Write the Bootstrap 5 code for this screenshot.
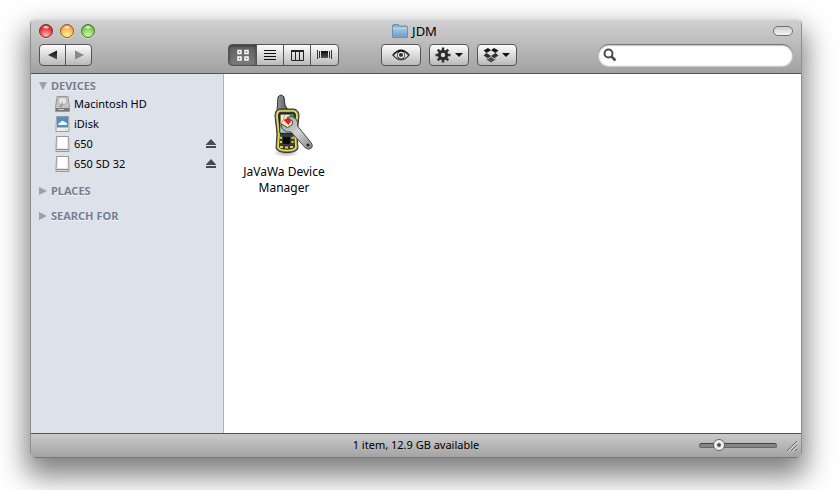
<!DOCTYPE html>
<html lang="en">
<head>
<meta charset="utf-8">
<meta name="viewport" content="width=device-width, initial-scale=1">
<title>JDM</title>
<link href="https://cdn.jsdelivr.net/npm/bootstrap@5.3.0/dist/css/bootstrap.min.css" rel="stylesheet">
<style>
body{background:#fff;font-family:"Lucida Grande","Noto Sans","Open Sans",sans-serif;font-size:12px;line-height:16px;color:#000}
svg{display:block;flex:none}
.desk{padding:19px 38px 32px 30px}
.finder{border:1px solid #8e8e8e;border-top-color:#ddd;border-bottom-color:#777;border-radius:5px;box-shadow:0 14px 28px 4px rgba(0,0,0,.5);overflow:hidden}
.chrome{background:linear-gradient(#d0d0d0,#a2a2a2);border-bottom:1px solid #515151;padding:0 8px 7px}
.title-row{height:24px;padding-bottom:2px;display:grid;grid-template-columns:1fr auto 1fr}
.title-name{padding-right:3px}
.title-row h1{font-size:13px;line-height:16px;font-weight:400}
.lights{gap:7px}
.light{width:14px;height:14px;border-radius:50%;border:1px solid #7a2a2a;box-shadow:0 1px 0 rgba(255,255,255,.4)}
.light.red{background:radial-gradient(ellipse 4px 2px at 50% 18%,#fff,transparent),radial-gradient(circle at 50% 85%,#ffb5b5,#e8333c 60%,#a51620)}
.light.amber{border-color:#9a5a25;background:radial-gradient(ellipse 4px 2px at 50% 18%,#fff,transparent),radial-gradient(circle at 50% 85%,#fff59a,#f4b44c 60%,#c8651c)}
.light.green{border-color:#477a2c;background:radial-gradient(ellipse 4px 2px at 50% 18%,#fff,transparent),radial-gradient(circle at 50% 85%,#d2f7a2,#82c95a 60%,#3f8a25)}
.pill{width:20px;height:10px;border:1px solid #707070;border-radius:5px;background:linear-gradient(#ccc,#f6f6f6)}
.tool{height:22px;padding:0;border:1px solid #545454;border-radius:4px;background:linear-gradient(#fdfdfd,#b9b9b9);color:#222;display:flex;align-items:center;justify-content:center;--bs-btn-hover-color:#222;--bs-btn-hover-border-color:#545454}
.tool.wide{width:40px}
.tool.view{width:28px}
.tool.back{width:27px}
.tool.chosen,.tool.flow{width:29px}
.tool.chosen{background:linear-gradient(#606060,#7c7c7c);color:#fff;box-shadow:inset 0 1px 3px #333}
.views{margin-left:136px}
.actions{margin-left:42px}
.search{width:195px;height:22px;border-radius:11px;background:#fff;box-shadow:inset 0 1px 2px #444,0 1px 0 #c9c9c9;padding:0 8px 0 5px}
.search input{font-size:12px;outline:0}
.sidebar{width:193px;background:#dde2ea;border-right:1px solid #b1b3b7;padding-top:4px}
.group-head{font-size:11px;font-weight:700;color:#747f92;text-shadow:0 1px 0 #f3f5f8;height:16px;padding:0 0 0 8px;gap:4px;line-height:16px}
.next-group{margin-top:9px}
.place{height:20px;font-size:11px;padding:0 6px 0 24px;gap:4px;color:#000}
.files{padding:18px 10px}
.file{width:100px;color:#000;padding:0}
.status{background:linear-gradient(#cbcbcb,#a3a3a3);border-top:1px solid #515151;height:24px;padding-bottom:1px;display:grid;grid-template-columns:1fr auto 1fr;font-size:11px}
.zoom{width:78px;height:14px;appearance:none;background:none}
.zoom::-webkit-slider-runnable-track{height:5px;border:1px solid #666;border-top-color:#444;border-radius:3px;background:#858585}
.zoom::-webkit-slider-thumb{appearance:none;width:12px;height:12px;margin-top:-5px;border:1px solid #666;border-radius:50%;background:radial-gradient(circle,#444 0 1px,#aaa 2px,#f8f8f8 3px,#ddd)}
.grip{margin-right:2px}
</style>
</head>
<body>
<svg width="0" height="0" class="position-absolute" aria-hidden="true">
<defs>
<linearGradient id="ink" x2="0" y2="1"><stop stop-color="#0b0b0b"/><stop offset="1" stop-color="#555"/></linearGradient>
<linearGradient id="fold" x2="0" y2="1"><stop stop-color="#a9cbe3"/><stop offset="1" stop-color="#6e9fc4"/></linearGradient>
<linearGradient id="steel" x2="1" y2="1"><stop stop-color="#9a9a9a"/><stop offset=".5" stop-color="#d2d2d2"/><stop offset="1" stop-color="#858585"/></linearGradient>
<linearGradient id="mast"><stop stop-color="#999"/><stop offset="1" stop-color="#555"/></linearGradient>
<radialGradient id="shade"><stop stop-color="#aaa"/><stop offset="1" stop-color="#fff"/></radialGradient>
<symbol id="card-drive" viewBox="0 0 14 16"><path d="M1 .5h12l.5 12v3H.5v-3z" fill="#d5d5d5" stroke="#999"/><path d="M2 1h10v11.500H2z" fill="#fff"/><path d="M1 13.500h12" stroke="#888"/></symbol>
<symbol id="eject" viewBox="0 0 12 10"><path d="M6 0l5.500 6H.5z" fill="#484c52"/><path d="M1 7h10v2H1z" fill="#484c52"/></symbol>
</defs>
</svg>
<main class="desk min-vh-100 d-flex">
<section class="finder flex-grow-1 d-flex flex-column">
<header class="chrome">
<div class="title-row align-items-center">
<div class="lights d-flex align-items-center">
<button class="light red p-0" aria-label="Close"></button><button class="light amber p-0" aria-label="Minimize"></button><button class="light green p-0" aria-label="Zoom"></button>
</div>
<div class="title-name d-flex align-items-center gap-1">
<svg width="16" height="14" viewBox="0 0 16 14"><path d="M.5 13.500V2Q.5.500 2 .5h4Q7 .5 7.500 2H14q1.500 0 1.500 1v10.500z" fill="#86b0cf" stroke="#6a93b0"/><path d="M1 4h14v9H1z" fill="url(#fold)"/><path d="M1 4h14" stroke="#c6deee"/></svg>
<h1 class="m-0">JDM</h1>
</div>
<button class="pill p-0 ms-auto" aria-label="Toggle toolbar"></button>
</div>
<div class="d-flex align-items-center">
<div class="btn-group" role="group" aria-label="History">
<button class="btn tool back" aria-label="Back"><svg width="10" height="10"><path d="M0 5l9-4.500v9z" fill="url(#ink)"/></svg></button>
<button class="btn tool back" aria-label="Forward"><svg width="10" height="10"><path d="M10 5L1 .5v9z" fill="#888"/></svg></button>
</div>
<div class="btn-group views" role="group" aria-label="View">
<button class="btn tool chosen" aria-label="Icons"><svg width="12" height="12" fill="none" stroke="#fff" stroke-width="1.500"><path d="M1 1.500h3v3H1zM8 1.500h3v3H8zM1 8h3v3H1zM8 8h3v3H8z"/></svg></button>
<button class="btn tool view" aria-label="List"><svg width="12" height="12" stroke="#111"><path d="M0 1.500h12M0 4.500h12M0 7.500h12M0 10.500h12"/></svg></button>
<button class="btn tool view" aria-label="Columns"><svg width="13" height="11" fill="none" stroke="#222"><path d="M.5 1.500h12v9H.5zM4.500 1v9M8.500 1v9"/><path d="M0 1h13" stroke-width="2"/></svg></button>
<button class="btn tool flow" aria-label="Cover Flow"><svg width="15" height="10"><path d="M4 1h7v7H4z" fill="url(#ink)"/><path d="M.5 0v9M2.500 1v7M12.500 1v7M14.500 0v9" stroke="#333"/></svg></button>
</div>
<div class="actions d-flex gap-2">
<button class="btn tool wide" aria-label="Quick Look"><svg width="18" height="12" viewBox="0 0 18 12"><path d="M0 6Q9-5 18 6 9 17 0 6z" fill="url(#ink)"/><path d="M2 6.500Q4 3.500 6 3q-2 3 0 6.500Q4 8.500 2 6.500zM16 6.500Q14 3.500 12 3q2 3 0 6.500 2-1 4-3z" fill="#ddd"/><circle cx="9" cy="6" r="2.700" fill="none" stroke="#eee" stroke-width="1.200"/></svg></button>
<button class="btn tool wide" aria-label="Action"><svg width="28" height="16" viewBox="0 0 28 16"><path d="M8 .5v15M.5 8h15M2.700 2.700l10.600 10.600M13.300 2.700L2.700 13.300" stroke="#333" stroke-width="2.500"/><circle cx="8" cy="8" r="3.700" fill="#dcdcdc" stroke="#2b2b2b" stroke-width="3"/><path d="M20 6h8l-4 4z" fill="#111"/></svg></button>
<button class="btn tool wide" aria-label="Dropbox"><svg width="28" height="16" viewBox="0 0 28 16"><path d="M5 1l3 2.300L3.500 6 .5 3.500zM11 1l4.500 2.500-3 2.500L8 3.300zM3.500 6L8 9l-3 2.500L.5 8.500zM12.500 6l3 2.500L11 11.500 8 9zM8 10l3 2.500 1.500-1v1L8 15.500l-4.500-3v-1l1.500 1z" fill="url(#ink)"/><path d="M19 6h8l-4 4z" fill="#111"/></svg></button>
</div>
<form class="search ms-auto d-flex align-items-center" role="search">
<label for="find"><svg width="14" height="14" fill="none" stroke="#4c4c4c" aria-hidden="true"><circle cx="5.500" cy="5.500" r="4" stroke-width="2"/><path d="M8.500 8.500l4 4" stroke-width="2.500"/></svg></label>
<input id="find" type="search" aria-label="Search" class="border-0 bg-transparent flex-grow-1 w-100 p-0 ms-1">
</form>
</div>
</header>
<div class="flex-grow-1 d-flex">
<nav class="sidebar flex-shrink-0" aria-label="Sidebar">
<button class="btn group-head border-0 d-flex align-items-center"><svg width="8" height="8"><path d="M0 0h8L4 8z" fill="#97a1b1"/></svg>DEVICES</button>
<ul class="list-unstyled m-0">
<li class="place d-flex align-items-center"><svg width="15" height="16" viewBox="0 0 15 16"><path d="M2 .5h11l1.500 11v4H.5v-4z" fill="#c4c4c6" stroke="#999"/><ellipse cx="7.500" cy="5" rx="4.500" ry="3.800" fill="#e4e4e6" stroke="#aaa"/><path d="M8 5l-4 6h3z" fill="#999"/><path d="M1 12h13v3H1z" fill="#777"/><path d="M3 13.500h6" stroke="#ccc"/></svg><a href="#" class="text-reset text-decoration-none flex-grow-1">Macintosh HD</a></li>
<li class="place d-flex align-items-center"><svg width="15" height="16" viewBox="0 0 15 16"><path d="M1.500.5h12l.5 12v3H1v-3z" fill="#eee" stroke="#999"/><path d="M2 1h11v10.500H2z" fill="#4b91cf"/><path d="M3.500 9q-.5-2.500 2-2.500Q7 3.500 9.500 6q2.500 0 2.500 3z" fill="#fff"/><path d="M10 14h2" stroke="#d8cf45"/></svg><a href="#" class="text-reset text-decoration-none flex-grow-1">iDisk</a></li>
<li class="place d-flex align-items-center"><svg width="15" height="16"><use href="#card-drive"/></svg><a href="#" class="text-reset text-decoration-none flex-grow-1">650</a><button class="btn border-0 p-0" aria-label="Eject 650"><svg width="12" height="10"><use href="#eject"/></svg></button></li>
<li class="place d-flex align-items-center"><svg width="15" height="16"><use href="#card-drive"/></svg><a href="#" class="text-reset text-decoration-none flex-grow-1">650 SD 32</a><button class="btn border-0 p-0" aria-label="Eject 650 SD 32"><svg width="12" height="10"><use href="#eject"/></svg></button></li>
</ul>
<button class="btn group-head next-group border-0 d-flex align-items-center"><svg width="8" height="8"><path d="M0 0v8l8-4z" fill="#97a1b1"/></svg>PLACES</button>
<button class="btn group-head next-group border-0 d-flex align-items-center"><svg width="8" height="8"><path d="M0 0v8l8-4z" fill="#97a1b1"/></svg>SEARCH FOR</button>
</nav>
<div class="files flex-grow-1 bg-white">
<a href="#" class="file d-flex flex-column align-items-center text-center text-decoration-none">
<svg width="64" height="72" viewBox="0 0 64 72">
<ellipse cx="34" cy="61" rx="13" ry="4" fill="url(#shade)"/>
<path d="M25 19l1-14q3-4 6 0l1 8 3 5z" fill="url(#mast)" stroke="#333"/>
<path d="M27 17h15q5 1 5 7l-2 18 1 14q-1 4.500-11 4.500T24 56l1-14-2-18q0-6 4-7z" fill="#777" stroke="#333"/>
<path d="M27.500 19h14q3.500 1 3.500 5l-2 18 1 13q-1 3.500-9 3.500T26 55l1-13-2-18q0-4 2.500-5z" fill="#3a3a3a" stroke="#e9df4c" stroke-width="1.700"/>
<path d="M28 22h14v19H28z" fill="#f1ebcf" stroke="#111"/>
<path d="M37 22.500h4.500v7z" fill="#2b9a3d"/>
<path d="M28.500 35l6-1 7 6.500h-13z" fill="#8fd3df"/>
<path d="M33 23l-4 10" stroke="#c9a45b"/>
<path d="M31.500 28l5-2.500 3 3-3 4.500z" fill="#e3201c"/>
<rect x="31" y="45" width="7" height="7" rx="1" fill="#0c0c0c"/>
<path d="M27.500 44.500l2.500.5v2l-2.500-.5zM42 44.500l-2.500.5v2l2.500-.5zM28 49h2v2h-2zm11.500 0h2v2h-2zM28 54h3v2h-3zm5 .5h3v2h-3zm5-.5h3v2h-3z" fill="#ddd44a"/>
<path d="M35 25.500q5-2.500 9 1.500 2.500 3 1.500 7L59 50.500q2.500 3 .5 5.500-3 2.500-6 0L39 40q-5 1-8.500-3-1.500-2-1-5l6 3.500 4.500-2.500.5-4z" fill="url(#steel)" stroke="#4a4a4a"/>
<circle cx="56" cy="53" r="1.500" fill="#222"/>
</svg>
<span>JaVaWa Device Manager</span>
</a>
</div>
</div>
<footer class="status align-items-center">
<span></span>
<span>1 item, 12.9 GB available</span>
<div class="d-flex align-items-center justify-content-end gap-2">
<input type="range" class="zoom m-0" aria-label="Icon size" min="0" max="100" value="21">
<svg class="grip align-self-end" width="14" height="16" stroke="#666" aria-hidden="true"><path d="M2 14L12 4M6 14l6-6M10 14l2-2"/><path d="M3 14.500l9.500-9.500M7 14.500l5.500-5.500" stroke="#ddd"/></svg>
</div>
</footer>
</section>
</main>
<script src="https://cdn.jsdelivr.net/npm/bootstrap@5.3.0/dist/js/bootstrap.bundle.min.js"></script>
</body>
</html>
